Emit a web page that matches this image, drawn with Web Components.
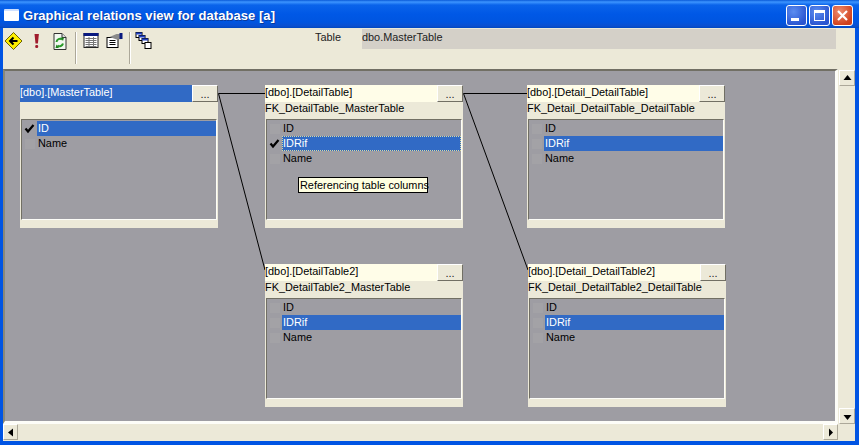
<!DOCTYPE html>
<html>
<head>
<meta charset="utf-8">
<title>Graphical relations view</title>
<style>
  html, body { margin: 0; padding: 0; background: #0054e3; overflow: hidden; }
  body { font: 10.9px "Liberation Sans", Arial, sans-serif; color: #000; }
</style>
</head>
<body>
<xp-window>
  <xp-titlebar slot="title" text="Graphical relations view for database [a]"></xp-titlebar>
  <xp-toolbar slot="toolbar" label="Table" value="dbo.MasterTable">
    <tool-icon name="back"></tool-icon>
    <tool-icon name="run"></tool-icon>
    <tool-icon name="refresh"></tool-icon>
    <tool-sep></tool-sep>
    <tool-icon name="grid"></tool-icon>
    <tool-icon name="props"></tool-icon>
    <tool-sep></tool-sep>
    <tool-icon name="stack"></tool-icon>
  </xp-toolbar>
  <relation-canvas slot="canvas">
    <table-node style="left:15px;top:14px" name="[dbo].[MasterTable]" active>
      <column-row checked selected>ID</column-row>
      <column-row>Name</column-row>
    </table-node>
    <table-node style="left:260px;top:14px" name="[dbo].[DetailTable]" fk="FK_DetailTable_MasterTable">
      <column-row>ID</column-row>
      <column-row checked selected focused>IDRif</column-row>
      <column-row>Name</column-row>
      <hint-tip>Referencing table columns</hint-tip>
    </table-node>
    <table-node style="left:522px;top:14px" name="[dbo].[Detail_DetailTable]" fk="FK_Detail_DetailTable_DetailTable">
      <column-row>ID</column-row>
      <column-row selected>IDRif</column-row>
      <column-row>Name</column-row>
    </table-node>
    <table-node style="left:260px;top:193px" name="[dbo].[DetailTable2]" fk="FK_DetailTable2_MasterTable">
      <column-row>ID</column-row>
      <column-row selected>IDRif</column-row>
      <column-row>Name</column-row>
    </table-node>
    <table-node style="left:523px;top:193px" name="[dbo].[Detail_DetailTable2]" fk="FK_Detail_DetailTable2_DetailTable">
      <column-row>ID</column-row>
      <column-row selected>IDRif</column-row>
      <column-row>Name</column-row>
    </table-node>
  </relation-canvas>
  <xp-scrollbar slot="vscroll" dir="v"></xp-scrollbar>
  <xp-scrollbar slot="hscroll" dir="h"></xp-scrollbar>
</xp-window>

<script>
// small helper so every element gets an open shadow root from a string
function shadow(el, html) {
  el.attachShadow({ mode: 'open' }).innerHTML = html;
}

class XpWindow extends HTMLElement {
  constructor() {
    super();
    shadow(this, `
      <style>
        :host { display: block; width: 859px; height: 445px; box-sizing: border-box; background: #0054e3; }
        .wrap { display: grid; height: 445px; box-sizing: border-box;
                grid-template-columns: 3px 835px 17px 4px;
                grid-template-rows: 28px 41px 355px 17px 4px; }
        .title { grid-column: 1 / -1; grid-row: 1; }
        .toolbar { grid-column: 2 / 4; grid-row: 2; }
        .canvas { grid-column: 2; grid-row: 3; }
        .vscroll { grid-column: 3; grid-row: 3; }
        .hscroll { grid-column: 2; grid-row: 4; }
        .corner { grid-column: 3; grid-row: 4; background: #ece9d8; }
      </style>
      <div class="wrap">
        <div class="title"><slot name="title"></slot></div>
        <div class="toolbar"><slot name="toolbar"></slot></div>
        <div class="canvas"><slot name="canvas"></slot></div>
        <div class="vscroll"><slot name="vscroll"></slot></div>
        <div class="hscroll"><slot name="hscroll"></slot></div>
        <div class="corner"></div>
      </div>`);
  }
}

class XpTitlebar extends HTMLElement {
  connectedCallback() {
    shadow(this, `
      <style>
        :host { display: flex; align-items: center; height: 28px; box-sizing: border-box; padding: 2px 6px 0 4px;
                background: linear-gradient(#0a5ad8 0, #3d95ff 2px, #0a63ea 5px, #0058e6 14px, #0055e0 22px, #0a4fd0 26px, #0048c0 28px);
                color: #fff; }
        .ico { width: 15px; height: 12px; background: #fff; border-top: 2px solid #cfe0ff; border-radius: 1px; margin: 0 4px 0 0; flex: none; box-sizing: border-box; }
        .txt { font: bold 13px "Liberation Sans", Arial, sans-serif; letter-spacing: .05px; flex: 1; text-shadow: 1px 1px 0 #0a3a9c; white-space: nowrap; }
        .btn { width: 21px; height: 21px; box-sizing: border-box; margin-left: 2px; border: 1px solid #fff; border-radius: 3px;
               background: radial-gradient(circle at 35% 30%, #5c8df0, #2a55d0 75%); display: flex; }
        .btn.close { background: radial-gradient(circle at 35% 30%, #ee8d6f, #d0401c 75%); }
        svg { width: 19px; height: 19px; }
      </style>
      <span class="ico"></span>
      <span class="txt">${this.getAttribute('text')}</span>
      <span class="btn"><svg viewBox="0 0 19 19"><rect x="4" y="12" width="8" height="3" fill="#fff"/></svg></span>
      <span class="btn"><svg viewBox="0 0 19 19"><path d="M4 4h11v11H4z M5 7v7h9V7z" fill="#fff" fill-rule="evenodd"/></svg></span>
      <span class="btn close"><svg viewBox="0 0 19 19"><path d="M5 5l9 9M14 5l-9 9" stroke="#fff" stroke-width="2.2" fill="none"/></svg></span>`);
  }
}

class XpToolbar extends HTMLElement {
  connectedCallback() {
    shadow(this, `
      <style>
        :host { display: flex; height: 41px; box-sizing: border-box; background: #ece9d8; }
        .tools { display: flex; align-items: flex-start; padding: 2px 0 0 0; width: 312px; flex: none; box-sizing: border-box; }
        .label { width: 47px; flex: none; padding-top: 3px; color: #222; }
        .field { width: 474px; flex: none; height: 20px; box-sizing: border-box; background: #d4d0c8; color: #222; padding: 2px 0 0 0; margin-top: 1px; }
      </style>
      <div class="tools"><slot></slot></div>
      <div class="label">${this.getAttribute('label')}</div>
      <div class="field">${this.getAttribute('value')}</div>`);
  }
}

const TOOL_ICONS = {
  back: `<path d="M11 2.500L19.500 11 11 19.500 2.500 11z" fill="#fff000" stroke="#6b6400"/><path d="M15 11H8M11 7.500L7.500 11l3.500 3.500" stroke="#000" stroke-width="2" fill="none"/>`,
  run: `<path d="M9 4h4.400l-1 9.500h-2.400z" fill="#a01c2c"/><rect x="9.700" y="15" width="3" height="3" rx="1.200" fill="#a01c2c"/>`,
  refresh: `<path d="M5.500 3.500h8l4 4v12h-12z" fill="#f2f8f0" stroke="#333"/><path d="M13.500 3.500v4h4" fill="#ddd" stroke="#333"/><path d="M8 12a3.500 3.500 0 0 1 5.500-2.500" stroke="#2a9a2a" stroke-width="2" fill="none"/><path d="M14.500 13.500a3.500 3.500 0 0 1-5.500 2" stroke="#2a9a2a" stroke-width="2" fill="none"/><path d="M12 7.500l3.500 0-1 3.500zM10.500 18l-3.500 0 1-3.500z" fill="#1f7f1f"/>`,
  grid: `<rect x="4.500" y="3.500" width="14" height="14" fill="#fff" stroke="#222"/><rect x="4" y="3" width="15" height="3" fill="#0a1a80"/><path d="M6 8.500h11M6 10.500h11M6 12.500h11M6 14.500h11M6 16.500h11M9.500 7v10M14 7v10" stroke="#777" stroke-width="1" fill="none"/>`,
  props: `<rect x="4.500" y="7.500" width="11" height="10" fill="#fff" stroke="#000"/><path d="M7 10.500h6M7 12.500h6M7 14.500h6" stroke="#000"/><path d="M7 7l7-3h4l1 5-5 .5z" fill="#8a8a8a"/><path d="M17 3h3v6h-3z" fill="#0a1a80"/>`,
  stack: `<rect x="2.500" y="2.500" width="6" height="5" fill="#fff" stroke="#000"/><rect x="2.500" y="2.500" width="6" height="2" fill="#2040c0"/><rect x="5.500" y="5.500" width="6" height="5" fill="#fff" stroke="#000"/><rect x="5.500" y="5.500" width="6" height="2" fill="#2040c0"/><rect x="8.500" y="8.500" width="6" height="5" fill="#fff" stroke="#000"/><rect x="8.500" y="8.500" width="6" height="2" fill="#2040c0"/><rect x="11.500" y="12.500" width="6" height="6" fill="#fff" stroke="#000"/>`
};

class ToolIcon extends HTMLElement {
  connectedCallback() {
    shadow(this, `
      <style>
        :host { display: block; width: 22px; height: 22px; margin: 0 0.5px; }
        svg { display: block; width: 22px; height: 22px; }
      </style>
      <svg viewBox="1.5 0 22 22">${TOOL_ICONS[this.getAttribute('name')]}</svg>`);
  }
}

class ToolSep extends HTMLElement {
  constructor() {
    super();
    shadow(this, `<style>:host { display: block; width: 2px; height: 32px; margin: 2px 3px 0 3px; background: #aca899; border-right: 1px solid #fff; box-sizing: border-box; }</style>`);
  }
}

class RelationCanvas extends HTMLElement {
  constructor() {
    super();
    shadow(this, `
      <style>
        :host { display: block; position: relative; width: 835px; height: 355px; box-sizing: border-box; overflow: hidden;
                background: #9e9da3; border-top: 2px solid #716f64; border-left: 2px solid #8a8878; border-right: 3px solid #fdfdf8; border-bottom: 3px solid #fdfdf8; }
        svg { position: absolute; left: 0; top: 0; width: 830px; height: 350px; }
      </style>
      <svg viewBox="0 0 830 350" fill="none" stroke="#000" stroke-width="1">
        <path d="M213.500 22.500H260M213.500 22.500L260 199"/>
        <path d="M458.500 22.500H522M458.500 22.500L523 199"/>
      </svg>
      <slot></slot>`);
  }
}

class TableNode extends HTMLElement {
  connectedCallback() {
    const active = this.hasAttribute('active');
    shadow(this, `
      <style>
        :host { display: block; position: absolute; width: 198px; height: 143px; background: #ece9d8; }
        .head { display: flex; height: 17px; }
        .name { width: 172px; flex: none; line-height: 15px; white-space: nowrap; overflow: hidden;
                background: ${active ? '#316ac5' : '#fffde8'}; color: ${active ? '#fff' : '#000'}; }
        .more { width: 26px; flex: none; box-sizing: border-box; background: #ece9d8; font-size: 11px; line-height: 16px; text-align: center; color: #222;
                border: 1px solid; border-color: #fff #716f64 #716f64 #fff; }
        .fk { height: 17px; line-height: 13px; white-space: nowrap; }
        .list { position: relative; height: 101px; margin: 0 1px 0 1px; box-sizing: border-box; padding-top: 1px; background: #9e9da3;
                border-top: 1px solid #716f64; border-left: 1px solid #716f64; border-right: 1px solid #fdfdf8; border-bottom: 1px solid #fdfdf8; }
      </style>
      <div class="head"><div class="name">${this.getAttribute('name')}</div><div class="more">...</div></div>
      <div class="fk">${this.getAttribute('fk') || ''}</div>
      <div class="list"><slot></slot></div>`);
  }
}

class ColumnRow extends HTMLElement {
  connectedCallback() {
    const sel = this.hasAttribute('selected');
    const chk = this.hasAttribute('checked');
    const foc = this.hasAttribute('focused');
    shadow(this, `
      <style>
        :host { display: flex; height: 15px; }
        .box { width: 15px; flex: none; display: flex; align-items: center; justify-content: center; }
        .box span { display: block; width: 10px; height: 10px; background: #a3a2a6; }
        .box svg { display: block; width: 11px; height: 11px; }
        .txt { flex: 1; line-height: 14px; padding-left: 1px; box-sizing: border-box;
               ${sel ? 'background: #316ac5; color: #fff;' : ''}
               ${foc ? 'outline: 1px dotted #d8d8a0; outline-offset: -1px;' : ''} }
      </style>
      <div class="box">${chk
        ? '<svg viewBox="0 0 11 11"><path d="M1.500 5.500L4 8.500 9.500 2" stroke="#000" stroke-width="2.200" fill="none"/></svg>'
        : '<span></span>'}</div>
      <div class="txt"><slot></slot></div>`);
  }
}

class HintTip extends HTMLElement {
  constructor() {
    super();
    shadow(this, `
      <style>
        :host { display: block; position: absolute; left: 31px; top: 57px; box-sizing: border-box; height: 16px; width: 130px; padding: 0 0 0 1px;
                background: #ffffe1; border: 1px solid #000; line-height: 14px; white-space: nowrap; }
      </style>
      <slot></slot>`);
  }
}

class XpScrollbar extends HTMLElement {
  connectedCallback() {
    const v = this.getAttribute('dir') === 'v';
    const tri = (p) => `<svg viewBox="0 0 15 15" width="15" height="15"><path d="${p}" fill="#000"/></svg>`;
    shadow(this, `
      <style>
        :host { display: flex; flex-direction: ${v ? 'column' : 'row'}; justify-content: space-between;
                background: #ece9d8; ${v ? 'width: 17px; height: 355px; padding: 1px 0 0 1px; box-sizing: border-box;' : 'width: 835px; height: 17px;'} }
        .b { width: ${v ? '16px' : '15px'}; height: 16px; box-sizing: border-box; background: #ece9d8; display: flex; align-items: center; justify-content: center;
             border: 1px solid; border-color: #fff #aca899 #aca899 #fff; }
        svg { display: block; flex: none; }
      </style>
      <div class="b">${v ? tri('M7.500 4l4 5h-8z') : tri('M5 7.500l5-4v8z')}</div>
      <div class="b">${v ? tri('M3.500 6h8l-4 5z') : tri('M6 3.500l4 4-4 4z')}</div>`);
  }
}

customElements.define('xp-window', XpWindow);
customElements.define('xp-titlebar', XpTitlebar);
customElements.define('xp-toolbar', XpToolbar);
customElements.define('tool-icon', ToolIcon);
customElements.define('tool-sep', ToolSep);
customElements.define('relation-canvas', RelationCanvas);
customElements.define('table-node', TableNode);
customElements.define('column-row', ColumnRow);
customElements.define('hint-tip', HintTip);
customElements.define('xp-scrollbar', XpScrollbar);
</script>
</body>
</html>
